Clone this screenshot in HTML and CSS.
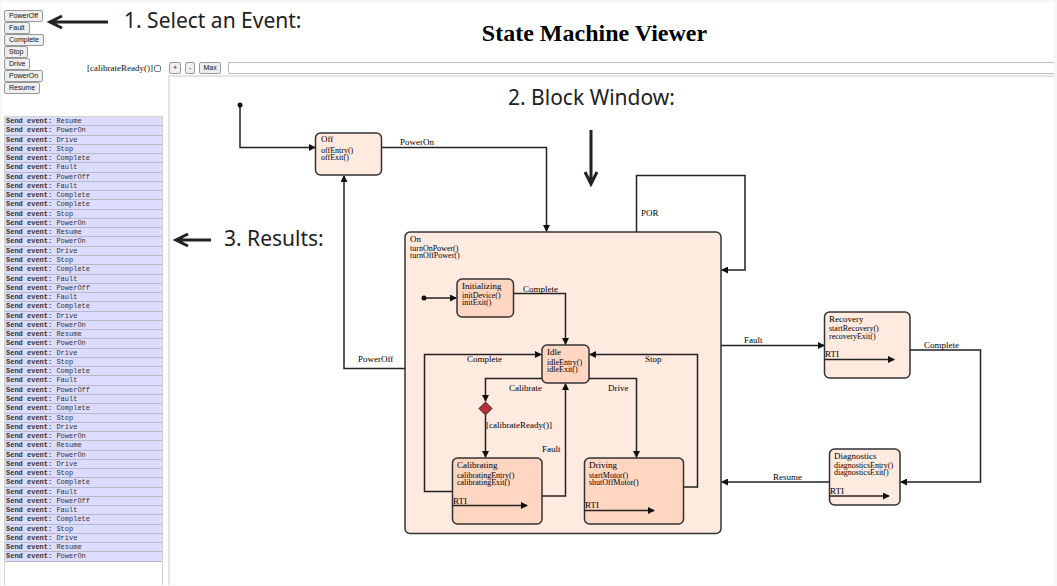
FILE: index.html
```html
<!DOCTYPE html>
<html lang="en">
<head>
<meta charset="utf-8">
<title>State Machine Viewer</title>
<link rel="stylesheet" href="styles.css">
</head>
<body>
<div class="page">
  <aside class="sidebar">
    <div class="controls">
      <div class="events">
        <button type="button">PowerOff</button>
        <button type="button">Fault</button>
        <button type="button">Complete</button>
        <button type="button">Stop</button>
        <button type="button">Drive</button>
        <button type="button">PowerOn</button>
        <button type="button">Resume</button>
      </div>
      <label class="guard" for="ready">[calibrateReady()]<input type="checkbox" id="ready"></label>
    </div>
    <ol class="log">
      <li><b>Send event:</b> Resume</li>
      <li><b>Send event:</b> PowerOn</li>
      <li><b>Send event:</b> Drive</li>
      <li><b>Send event:</b> Stop</li>
      <li><b>Send event:</b> Complete</li>
      <li><b>Send event:</b> Fault</li>
      <li><b>Send event:</b> PowerOff</li>
      <li><b>Send event:</b> Fault</li>
      <li><b>Send event:</b> Complete</li>
      <li><b>Send event:</b> Complete</li>
      <li><b>Send event:</b> Stop</li>
      <li><b>Send event:</b> PowerOn</li>
      <li><b>Send event:</b> Resume</li>
      <li><b>Send event:</b> PowerOn</li>
      <li><b>Send event:</b> Drive</li>
      <li><b>Send event:</b> Stop</li>
      <li><b>Send event:</b> Complete</li>
      <li><b>Send event:</b> Fault</li>
      <li><b>Send event:</b> PowerOff</li>
      <li><b>Send event:</b> Fault</li>
      <li><b>Send event:</b> Complete</li>
      <li><b>Send event:</b> Drive</li>
      <li><b>Send event:</b> PowerOn</li>
      <li><b>Send event:</b> Resume</li>
      <li><b>Send event:</b> PowerOn</li>
      <li><b>Send event:</b> Drive</li>
      <li><b>Send event:</b> Stop</li>
      <li><b>Send event:</b> Complete</li>
      <li><b>Send event:</b> Fault</li>
      <li><b>Send event:</b> PowerOff</li>
      <li><b>Send event:</b> Fault</li>
      <li><b>Send event:</b> Complete</li>
      <li><b>Send event:</b> Stop</li>
      <li><b>Send event:</b> Drive</li>
      <li><b>Send event:</b> PowerOn</li>
      <li><b>Send event:</b> Resume</li>
      <li><b>Send event:</b> PowerOn</li>
      <li><b>Send event:</b> Drive</li>
      <li><b>Send event:</b> Stop</li>
      <li><b>Send event:</b> Complete</li>
      <li><b>Send event:</b> Fault</li>
      <li><b>Send event:</b> PowerOff</li>
      <li><b>Send event:</b> Fault</li>
      <li><b>Send event:</b> Complete</li>
      <li><b>Send event:</b> Stop</li>
      <li><b>Send event:</b> Drive</li>
      <li><b>Send event:</b> Resume</li>
      <li><b>Send event:</b> PowerOn</li>
    </ol>
  </aside>

  <main class="viewer">
    <h1 class="title">State Machine Viewer</h1>
    <div class="toolbar">
      <button type="button" aria-label="Zoom in">+</button>
      <button type="button" aria-label="Zoom out">-</button>
      <button type="button">Max</button>
      <input type="text" class="command" aria-label="Command">
    </div>
    <div class="canvas">
      <svg class="diagram" viewBox="170 77 884 508" preserveAspectRatio="xMinYMin meet" role="img" aria-label="State diagram">
        <defs>
          <marker id="head" markerUnits="userSpaceOnUse" markerWidth="7" markerHeight="7" refX="6" refY="3.500" orient="auto"><path d="M0 0L7 3.500L0 7Z" fill="#111"/></marker>
        </defs>

        <rect class="outer" x="315.500" y="133" width="66" height="42" rx="5"/>
        <rect class="outer" x="405" y="232" width="316" height="301.500" rx="5"/>
        <rect class="outer" x="824.500" y="312" width="85.500" height="66" rx="5"/>
        <rect class="outer" x="829.500" y="449" width="70.500" height="56" rx="5"/>
        <rect class="inner" x="457" y="279" width="56.500" height="38" rx="5"/>
        <rect class="inner" x="542" y="345" width="47" height="38" rx="5"/>
        <rect class="inner" x="452.500" y="458" width="89.500" height="66" rx="5"/>
        <rect class="inner" x="584.500" y="458" width="99" height="66" rx="5"/>

        <g class="wires">
          <path d="M240 105V147.500H315"/>
          <path d="M382 147.500H546.500V231"/>
          <path d="M405 368.500H344V176"/>
          <path d="M636.500 232V175.500H745V270H722"/>
          <path d="M424 298H456"/>
          <path d="M514 293.500H565.500V344"/>
          <path d="M452 491.500H424.500V354.500H541"/>
          <path d="M542 378.500H485.500V401"/>
          <path d="M485.500 415V457"/>
          <path d="M542 496H565.500V384"/>
          <path d="M589 378.500H636.500V457"/>
          <path d="M683.500 487H697.500V354.500H590"/>
          <path d="M721 345.500H824"/>
          <path d="M910 350H980.500V482H901"/>
          <path d="M829 482H722"/>
          <path d="M452.500 505.500H527"/>
          <path d="M584.500 510.500H654"/>
          <path d="M825 359.500H894"/>
          <path d="M830 496H889"/>
        </g>
        <circle cx="240" cy="105" r="2.500" fill="#111"/>
        <circle cx="424" cy="298" r="2.500" fill="#111"/>
        <path class="choice" d="M485.500 402L492 408.500L485.500 415L479 408.500Z"/>

        <g class="label">
          <text x="321" y="142">Off</text>
          <text x="410" y="242">On</text>
          <text x="462" y="289">Initializing</text>
          <text x="547" y="355">Idle</text>
          <text x="457" y="468">Calibrating</text>
          <text x="589" y="468">Driving</text>
          <text x="829" y="322">Recovery</text>
          <text x="834" y="459">Diagnostics</text>
          <text x="400" y="145">PowerOn</text>
          <text x="358" y="362">PowerOff</text>
          <text x="641" y="216">POR</text>
          <text x="523" y="292">Complete</text>
          <text x="467" y="362">Complete</text>
          <text x="645" y="362">Stop</text>
          <text x="509" y="391">Calibrate</text>
          <text x="608" y="391">Drive</text>
          <text x="486" y="428">[calibrateReady()]</text>
          <text x="542" y="452">Fault</text>
          <text x="744" y="343">Fault</text>
          <text x="924" y="348">Complete</text>
          <text x="773" y="480">Resume</text>
          <text x="453" y="504">RTI</text>
          <text x="585" y="508">RTI</text>
          <text x="825" y="357">RTI</text>
          <text x="830" y="494">RTI</text>
        </g>
        <g class="action">
          <text x="321" y="153">offEntry()</text>
          <text x="321" y="160">offExit()</text>
          <text x="410" y="251">turnOnPower()</text>
          <text x="410" y="258">turnOffPower()</text>
          <text x="462" y="298">initDevice()</text>
          <text x="462" y="305">initExit()</text>
          <text x="547" y="365">idleEntry()</text>
          <text x="547" y="372">idleExit()</text>
          <text x="457" y="478">calibratingEntry()</text>
          <text x="457" y="485">calibratingExit()</text>
          <text x="589" y="478">startMotor()</text>
          <text x="589" y="485">shutOffMotor()</text>
          <text x="829" y="331">startRecovery()</text>
          <text x="829" y="339">recoveryExit()</text>
          <text x="834" y="468">diagnosticsEntry()</text>
          <text x="834" y="475">diagnosticsExit()</text>
        </g>
      </svg>
    </div>
  </main>

  <div class="note note-events">
    <svg width="62" height="16" viewBox="0 0 62 16" aria-hidden="true"><path d="M61 8H3M15 2L3 8L15 14"/></svg>
    <span>1. Select an Event:</span>
  </div>
  <div class="note note-window">
    <span>2. Block Window:</span>
    <svg width="16" height="58" viewBox="0 0 16 58" aria-hidden="true"><path d="M8 1V55M2 43L8 55L14 43"/></svg>
  </div>
  <div class="note note-results">
    <svg width="39" height="16" viewBox="0 0 39 16" aria-hidden="true"><path d="M38 8H3M15 2L3 8L15 14"/></svg>
    <span>3. Results:</span>
  </div>
</div>
</body>
</html>
```

FILE: styles.css
```css
* {
  box-sizing: border-box;
}

body {
  margin: 0;
  background: #f6f6f6;
  color: #111;
  font-family: "Liberation Serif", serif;
}

.page {
  position: relative;
  display: flex;
  height: 100vh;
  padding: 2px 3px 1px 2px;
}

.sidebar {
  display: flex;
  flex: none;
  flex-direction: column;
  width: 166px;
  padding: 8px 5px 0 2px;
  background: #fff;
}

.controls {
  display: flex;
  justify-content: space-between;
  height: 106px;
}

.events {
  display: flex;
  flex-direction: column;
  align-items: flex-start;
}

button {
  height: 12px;
  padding: 0 4px;
  border: 1px solid #999;
  border-radius: 2px;
  background: #efefef;
  color: #111;
  font: 7px/10px "Liberation Sans", sans-serif;
}

.guard {
  display: flex;
  align-items: center;
  gap: 1px;
  height: 12px;
  margin-top: 52px;
  font-size: 9px;
  line-height: 12px;
}

.guard input {
  width: 7px;
  height: 7px;
  margin: 0 2px 0 0;
  border: 1px solid #777;
  border-radius: 2px;
  background: #fff;
  appearance: none;
}

.log {
  display: flex;
  flex: 1;
  flex-direction: column;
  min-height: 0;
  margin: 0;
  padding: 0 0 23px;
  border: 1px solid #d2d2d2;
  border-bottom: 0;
  list-style: none;
  font: 7px/8px "Liberation Mono", monospace;
}

.log li {
  flex: 1;
  min-height: 0;
  padding-left: 1px;
  border-bottom: 1px solid #b8b8c8;
  background: #dcdcfe;
  color: #333;
  white-space: pre;
}

.viewer {
  display: flex;
  flex: 1;
  flex-direction: column;
  min-width: 0;
  background: #fff;
}

.title {
  margin: 0;
  padding: 17px 33px 15px 0;
  color: #000;
  font-size: 24px;
  line-height: 28px;
  text-align: center;
}

.toolbar {
  display: flex;
  gap: 4px;
  height: 13px;
  padding-left: 1px;
}

.toolbar button {
  padding: 0 3px;
}

.toolbar .command {
  flex: 1;
  min-width: 0;
  height: 12px;
  margin-left: 3px;
  padding: 0 3px;
  border: 1px solid #bbb;
  border-right: 0;
  border-radius: 2px 0 0 2px;
  background: #fff;
  font: 8px "Liberation Sans", sans-serif;
}

.canvas {
  flex: 1;
  min-height: 0;
  border-top: 2px solid #e4e4e4;
  border-left: 2px solid #e4e4e4;
}

.diagram {
  display: block;
  width: 100%;
  height: 100%;
}

.outer,
.inner {
  stroke: #333;
  stroke-width: 1.5;
}

.outer {
  fill: #ffeae0;
}

.inner {
  fill: #ffd6c2;
}

.wires path {
  fill: none;
  stroke: #222;
  stroke-width: 1.5;
  marker-end: url(#head);
}

.choice {
  fill: #b92f33;
  stroke: #222;
}

.label {
  font-size: 9px;
}

.action {
  font-size: 8px;
}

.note {
  position: absolute;
  display: flex;
  align-items: center;
  color: #222;
  font: 21px/24px "Noto Sans", sans-serif;
  white-space: nowrap;
}

.note path {
  fill: none;
  stroke: #222;
  stroke-width: 3;
}

.note-events {
  top: 8px;
  left: 47px;
  gap: 15px;
}

.note-events svg,
.note-results svg {
  margin-top: 4px;
}

.note-window {
  top: 85px;
  left: 508px;
  flex-direction: column;
  gap: 20px;
}

.note-results {
  top: 226px;
  left: 173px;
  gap: 12px;
}
```
